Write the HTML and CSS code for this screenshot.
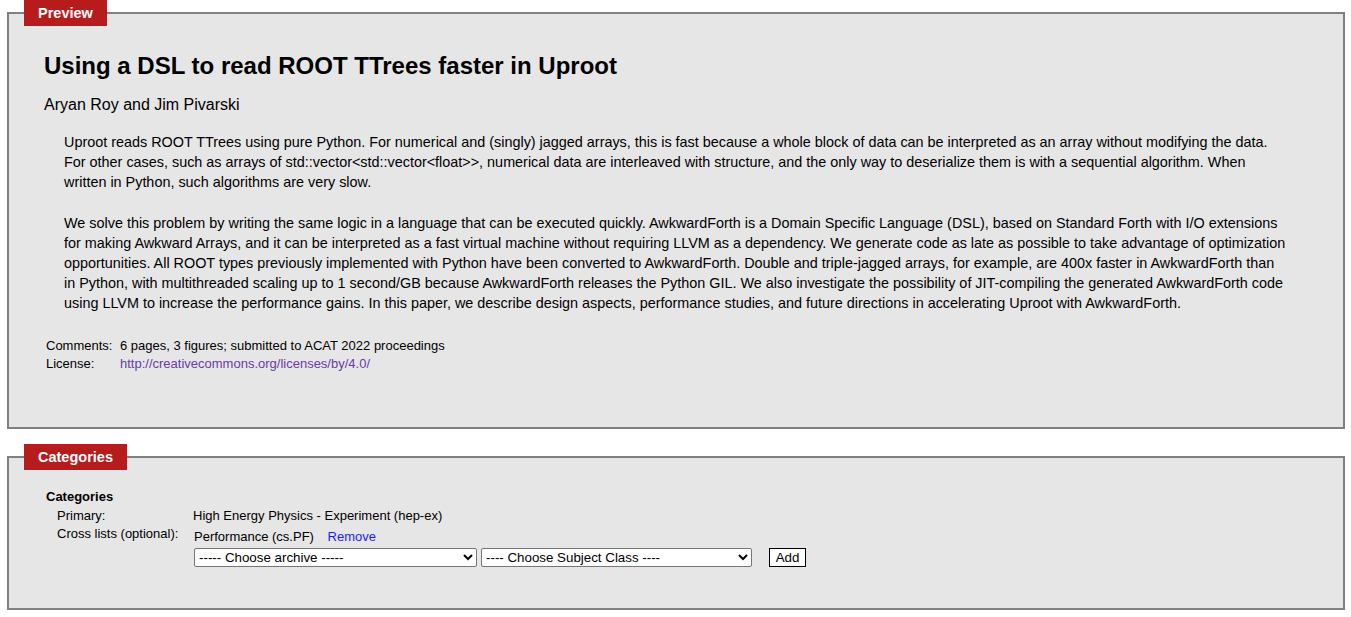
FILE: index.html
```html
<!DOCTYPE html>
<html>
<head>
<meta charset="utf-8">
<link rel="stylesheet" href="styles.css">
</head>
<body>
<fieldset class="box box-preview">
  <legend class="box-legend">Preview</legend>
  <h2 class="title">Using a DSL to read ROOT TTrees faster in Uproot</h2>
  <div class="authors">Aryan Roy and Jim Pivarski</div>
  <blockquote class="abstract">
    <p>Uproot reads ROOT TTrees using pure Python. For numerical and (singly) jagged arrays, this is fast because a whole block of data can be interpreted as an array without modifying the data. For other cases, such as arrays of std::vector&lt;std::vector&lt;float&gt;&gt;, numerical data are interleaved with structure, and the only way to deserialize them is with a sequential algorithm. When written in Python, such algorithms are very slow.</p>
    <p>We solve this problem by writing the same logic in a language that can be executed quickly. AwkwardForth is a Domain Specific Language (DSL), based on Standard Forth with I/O extensions for making Awkward Arrays, and it can be interpreted as a fast virtual machine without requiring LLVM as a dependency. We generate code as late as possible to take advantage of optimization opportunities. All ROOT types previously implemented with Python have been converted to AwkwardForth. Double and triple-jagged arrays, for example, are 400x faster in AwkwardForth than in Python, with multithreaded scaling up to 1 second/GB because AwkwardForth releases the Python GIL. We also investigate the possibility of JIT-compiling the generated AwkwardForth code using LLVM to increase the performance gains. In this paper, we describe design aspects, performance studies, and future directions in accelerating Uproot with AwkwardForth.</p>
  </blockquote>
  <div class="meta">
    <div class="meta-label">Comments:</div>
    <div class="meta-value">6 pages, 3 figures; submitted to ACAT 2022 proceedings</div>
    <div class="meta-label">License:</div>
    <div class="meta-value"><a class="visited-link" href="#">http://creativecommons.org/licenses/by/4.0/</a></div>
  </div>
</fieldset>

<fieldset class="box box-cats">
  <legend class="box-legend">Categories</legend>
  <div class="cat-heading">Categories</div>
  <div class="cat-grid">
    <div class="cat-label">Primary:</div>
    <div class="cat-value">High Energy Physics - Experiment (hep-ex)</div>
    <div class="cat-label cat-label-cross">Cross lists (optional):</div>
    <div class="cat-value cat-cross">
      <div class="cross-item">Performance (cs.PF) <a class="remove-link" href="#">Remove</a></div>
      <div class="cross-add">
        <select class="sel sel-archive"><option>----- Choose archive -----</option></select>
        <select class="sel sel-subject"><option>---- Choose Subject Class ----</option></select>
        <button class="add-btn">Add</button>
      </div>
    </div>
  </div>
</fieldset>
</body>
</html>
```
FILE: styles.css
```css
html, body {
  margin: 0;
  padding: 0;
  background: #ffffff;
  font-family: "Liberation Sans", Arial, sans-serif;
  color: #000;
}

.box {
  margin: 0 6px 0 7px;
  border: 2px solid #808080;
  background: #e6e6e6;
  padding: 0 35px;
  min-width: 0;
}

.box-preview {
  padding-bottom: 54px;
}

.box-cats {
  margin-top: 15px;
  padding: 0 35px 41px 35px;
}

.box-legend {
  background: #b71c1c;
  color: #fff;
  font-weight: bold;
  font-size: 14.5px;
  line-height: 18px;
  padding: 4px 14px;
  margin-left: -20px;
}

.title {
  font-size: 24px;
  line-height: 28px;
  font-weight: bold;
  margin: 26px 0 0 0;
}

.authors {
  font-size: 16px;
  line-height: 18px;
  margin-top: 16px;
}

.abstract {
  margin: 18px 20px 0 20px;
  font-size: 14.4px;
  line-height: 20.2px;
}

.abstract p {
  margin: 0 0 20px 0;
}

.abstract p:last-child {
  margin-bottom: 0;
}

.meta {
  display: grid;
  grid-template-columns: 74px auto;
  font-size: 13px;
  line-height: 18px;
  margin: 23px 0 0 2px;
}

.visited-link {
  color: #6a3aa8;
  text-decoration: none;
}

.cat-heading {
  font-size: 13px;
  font-weight: bold;
  line-height: 18px;
  margin: 18px 0 0 2px;
}

.cat-grid {
  display: grid;
  grid-template-columns: 136px auto;
  font-size: 13px;
  line-height: 18px;
  margin: 1px 0 0 13px;
}

.cat-cross {
  padding-top: 3px;
  padding-left: 1px;
}

.remove-link {
  color: #1a1aff;
  text-decoration: none;
  margin-left: 10px;
}

.cross-add {
  display: flex;
  align-items: center;
  gap: 4px;
  margin-top: 2px;
}

.sel {
  height: 19px;
  font-family: "Liberation Sans", Arial, sans-serif;
  font-size: 13.33px;
  padding: 0;
  background: #fff;
  border: 1px solid #767676;
  border-radius: 2px;
  color: #000;
}

.sel-archive {
  width: 283px;
}

.sel-subject {
  width: 271px;
}

.add-btn {
  margin-left: 13px;
  height: 19px;
  width: 37px;
  font-family: "Liberation Sans", Arial, sans-serif;
  font-size: 13.33px;
  padding: 0;
  background: #fff;
  border: 1px solid #000;
  border-radius: 0;
  color: #000;
}
```
